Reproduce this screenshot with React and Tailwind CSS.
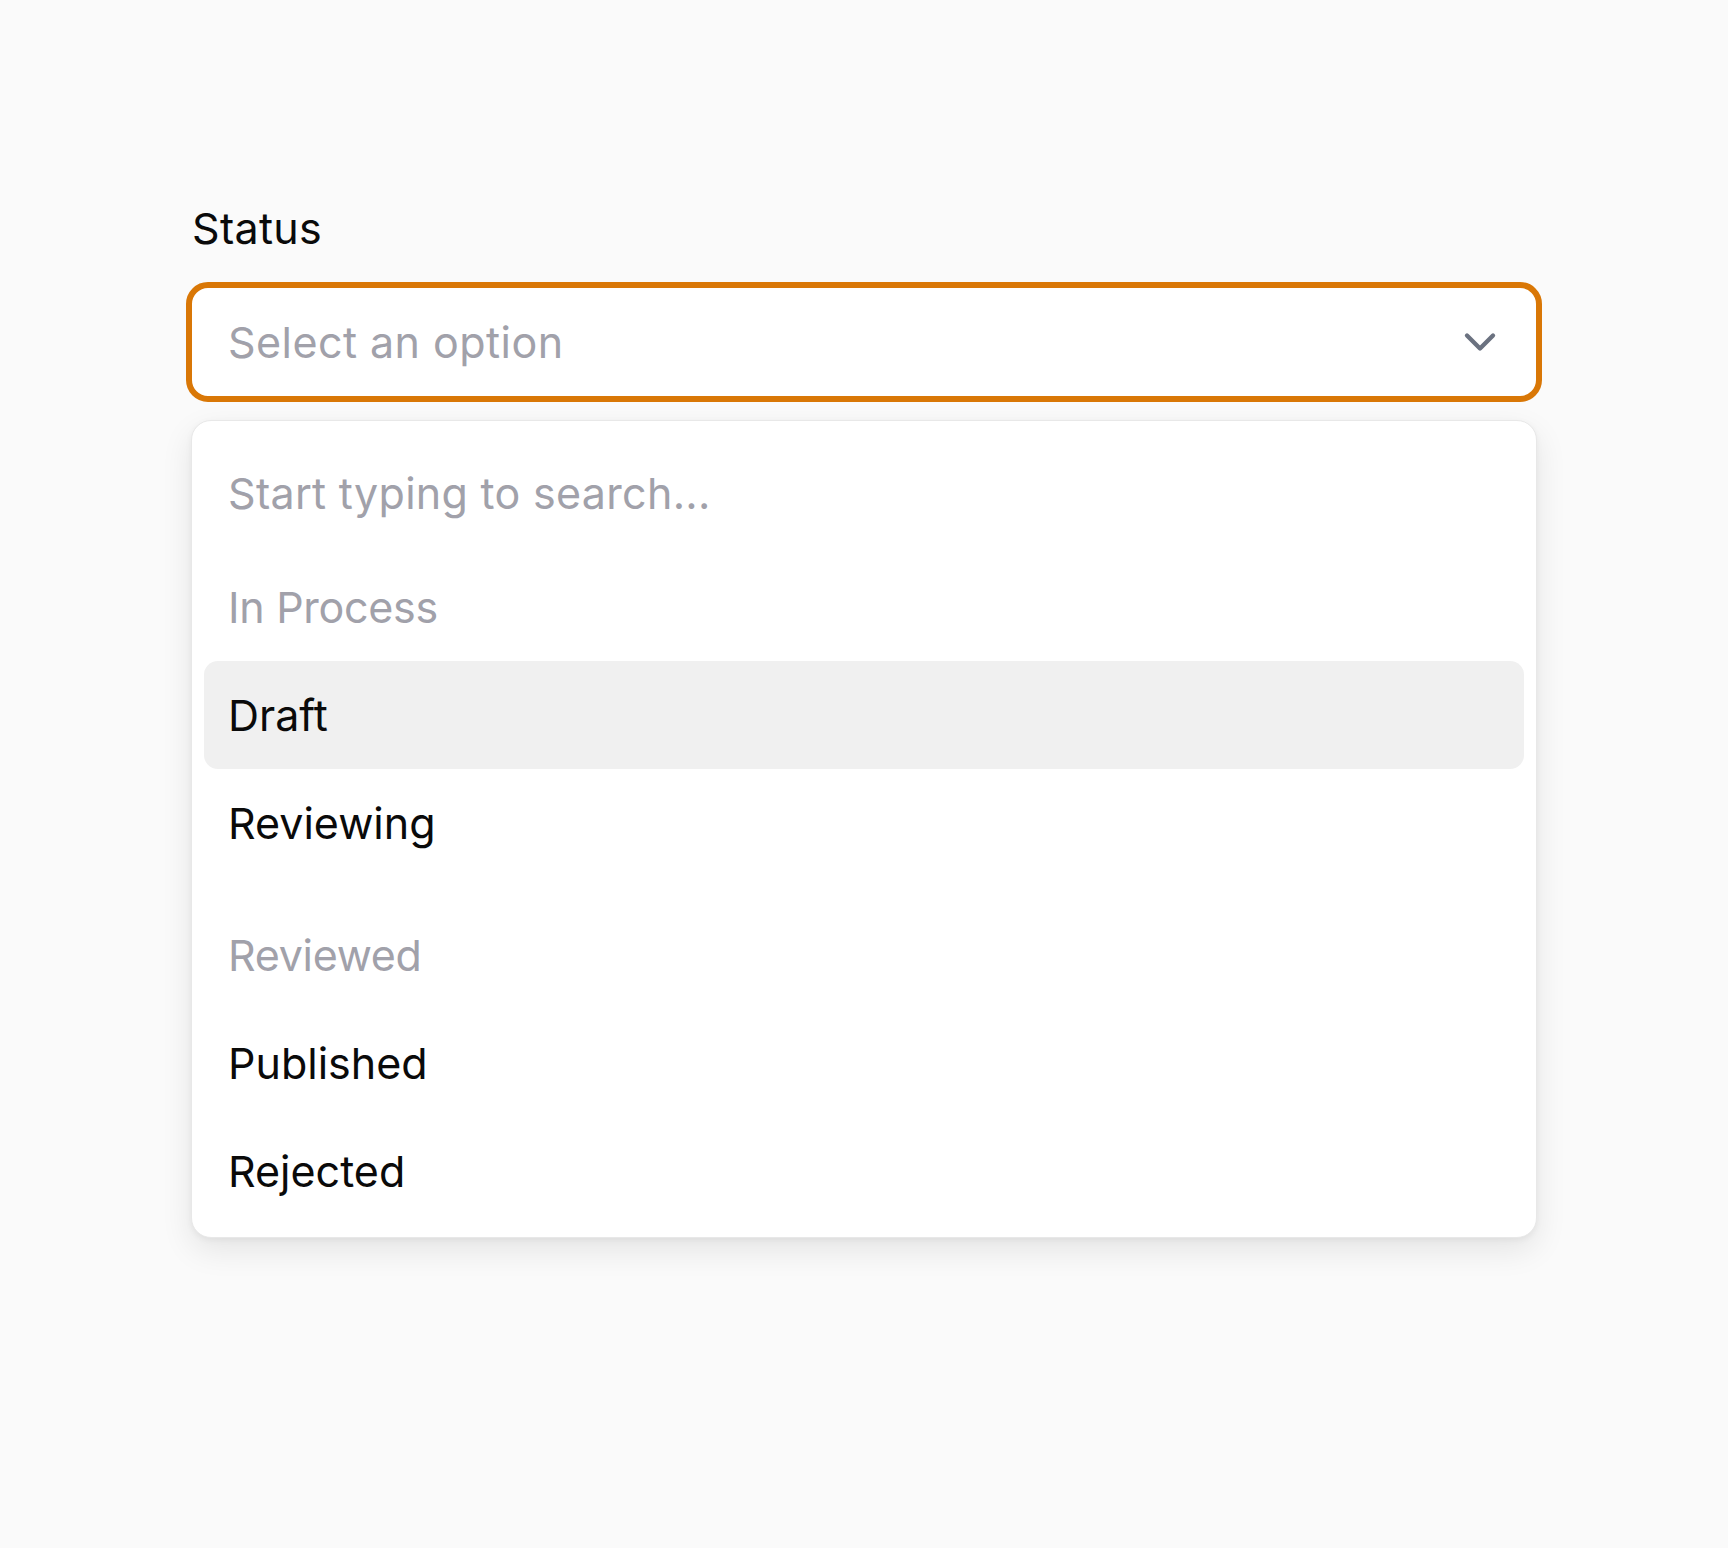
import { ChevronDown } from 'lucide-react';

const groups = [
  { label: 'In Process', options: ['Draft', 'Reviewing'] },
  { label: 'Reviewed', options: ['Published', 'Rejected'] },
];

export default function App() {
  const active = 'Draft';

  return (
    <div className="min-h-[1548px] bg-[#fafafa] pt-[202px] font-['Inter',sans-serif]">
      <div className="mx-auto w-[1356px]">
        <label className="block pl-[6px] text-[43px] leading-[52px] tracking-[0.3px] text-[#0a0a0a] mb-[28px]">Status</label>

        <button className="flex h-[120px] w-full items-center justify-between rounded-[22px] border-[6px] border-[#d97706] bg-white pl-[36px] pr-[30px] text-left">
          <span className="text-[43px] tracking-[0.45px] text-[#a1a1aa]">Select an option</span>
          <ChevronDown size={52} strokeWidth={2} className="text-[#6b7280]" />
        </button>

        <div className="mx-[5px] mt-[18px] rounded-[20px] border border-[#e8e8e8] bg-white p-3 shadow-[0_12px_32px_rgba(0,0,0,0.09),0_2px_6px_rgba(0,0,0,0.05)]">
          <div className="flex h-[120px] items-center px-[24px]">
            <input
              placeholder="Start typing to search..."
              className="w-full bg-transparent text-[43px] tracking-[0.3px] text-[#0a0a0a] outline-none placeholder-[#a1a1aa]"
            />
          </div>

          {groups.map((group, gi) => (
            <div key={group.label} className={gi > 0 ? 'mt-[24px]' : ''}>
              <div className="flex h-[108px] items-center px-[24px] text-[43px] tracking-[-0.3px] text-[#a1a1aa]">{group.label}</div>
              {group.options.map((opt) => (
                <div
                  key={opt}
                  className={
                    'flex h-[108px] items-center rounded-[14px] px-[24px] text-[43px] text-[#0a0a0a] ' +
                    (opt === active ? 'bg-[#f0f0f0]' : '')
                  }
                >
                  {opt}
                </div>
              ))}
            </div>
          ))}
        </div>
      </div>
    </div>
  );
}
